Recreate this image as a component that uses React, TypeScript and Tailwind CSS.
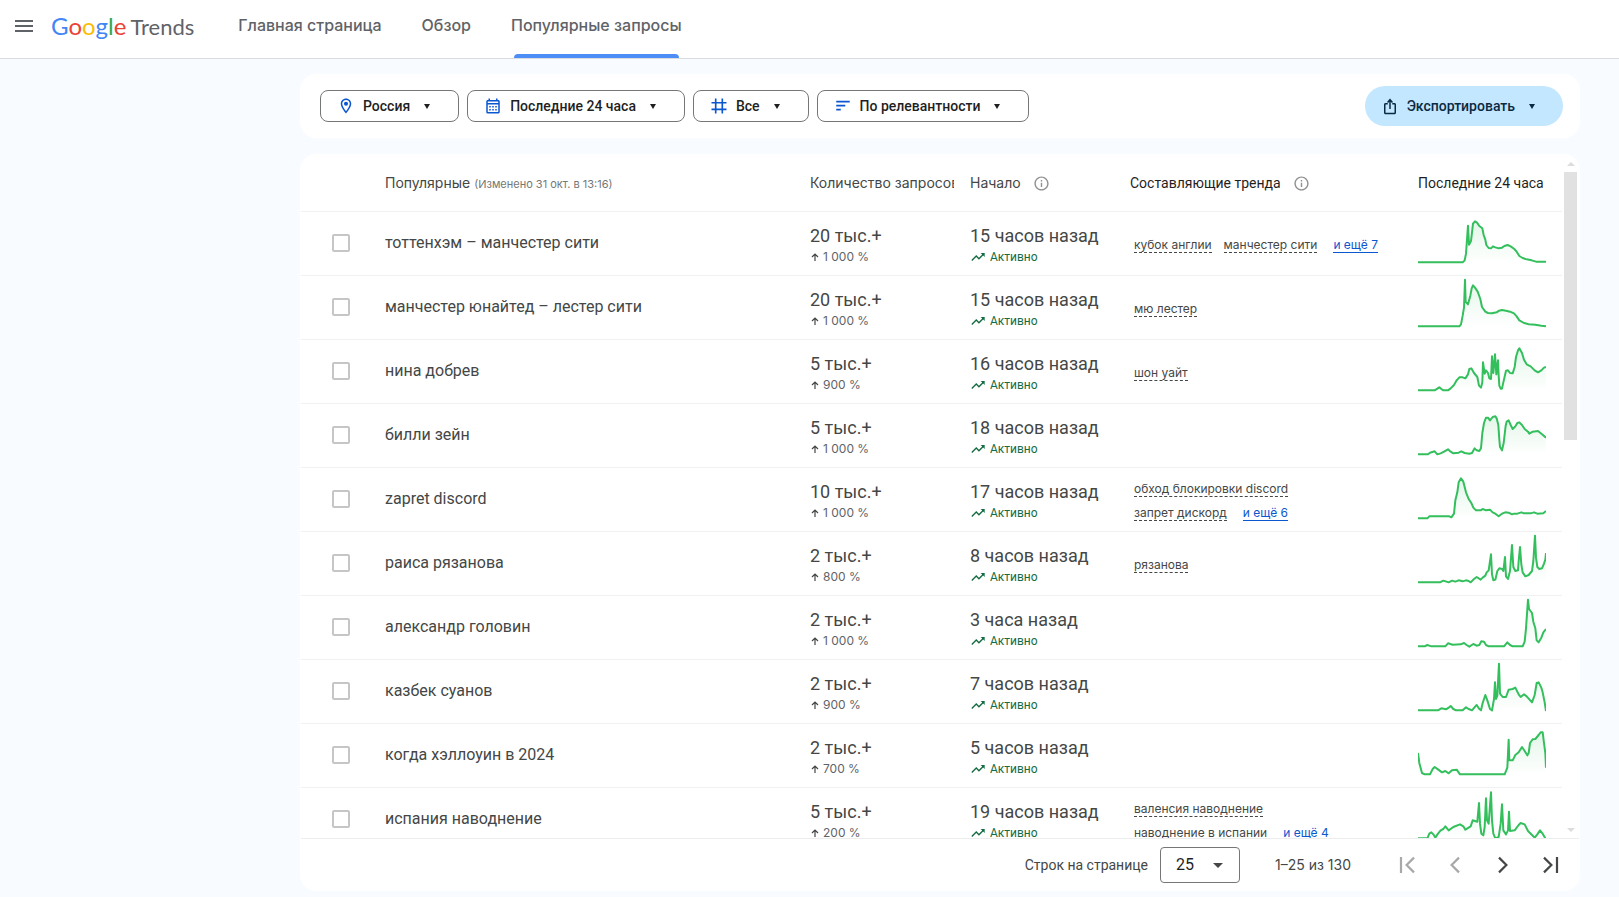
import React from "react";
import clsx from "clsx";

type Trend = {
  title: string;
  volume: string;
  growth: string;
  started: string;
  related?: string[];
  more?: string;
  points: string;
};

// points are drawn in a 384x192 box, the base line is y = 154
const trends: Trend[] = [
  {
    title: "тоттенхэм – манчестер сити",
    volume: "20 тыс.+",
    growth: "1 000 %",
    started: "15 часов назад",
    related: ["кубок англии", "манчестер сити"],
    more: "и ещё 7",
    points:
      "0,154 134,154 140,148 144,128 150,44 153,101 159,90 165,38 171,31 177,35 184,45 193,52 197,72 202,86 205,102 212,111 219,112 225,106 232,109 242,112 252,110 259,105 269,102 278,106 289,114 296,122 304,135 314,141 326,145 341,148 354,152 384,152",
  },
  {
    title: "манчестер юнайтед – лестер сити",
    volume: "20 тыс.+",
    growth: "1 000 %",
    started: "15 часов назад",
    related: ["мю лестер"],
    points:
      "0,154 124,154 129,148 134,122 138,98 141,14 143,80 150,88 157,62 161,40 165,31 171,38 179,50 187,72 192,96 202,110 210,114 222,115 236,112 243,107 252,105 264,107 276,110 288,115 296,124 304,136 318,144 332,148 352,149 370,152 384,154",
  },
  {
    title: "нина добрев",
    volume: "5 тыс.+",
    growth: "900 %",
    started: "16 часов назад",
    related: ["шон уайт"],
    points:
      "0,154 50,154 58,149 64,145 70,150 76,154 90,154 98,148 108,138 116,124 124,115 134,115 142,118 150,106 154,90 160,88 168,102 178,114 183,140 189,146 193,130 195,70 200,104 204,94 210,102 214,118 219,120 222,52 226,102 231,46 235,106 240,64 242,110 244,140 248,149 252,149 256,130 264,95 270,94 276,102 284,103 290,84 294,54 300,34 304,28 312,42 318,62 326,76 338,82 350,94 360,100 370,94 378,86 384,84",
  },
  {
    title: "билли зейн",
    volume: "5 тыс.+",
    growth: "1 000 %",
    started: "18 часов назад",
    points:
      "0,154 30,154 36,149 50,145 58,154 68,151 78,146 90,139 98,146 106,151 122,149 130,145 140,150 154,152 162,150 170,136 176,142 184,144 189,136 193,90 198,60 204,44 210,44 216,52 224,42 232,40 236,46 241,66 244,110 246,132 252,142 257,120 263,68 266,56 272,52 278,66 284,78 292,70 298,60 304,58 312,66 320,78 330,86 334,92 344,86 360,84 372,94 384,104",
  },
  {
    title: "zapret discord",
    volume: "10 тыс.+",
    growth: "1 000 %",
    started: "17 часов назад",
    related: ["обход блокировки discord", "запрет дискорд"],
    more: "и ещё 6",
    points:
      "0,154 28,154 34,148 94,148 100,151 108,140 112,100 118,76 122,46 129,34 136,44 144,76 152,96 160,108 166,122 174,130 188,130 194,126 204,130 216,128 224,136 232,140 242,148 252,140 262,136 272,137 282,142 288,140 298,140 310,136 318,139 338,139 348,136 358,140 376,139 384,132",
  },
  {
    title: "раиса рязанова",
    volume: "2 тыс.+",
    growth: "800 %",
    started: "8 часов назад",
    related: ["рязанова"],
    points:
      "0,154 66,154 76,149 92,154 102,149 112,152 122,148 134,151 144,148 152,150 158,154 168,144 176,138 188,146 194,140 202,134 206,124 212,118 219,70 222,130 226,148 232,146 238,120 244,112 252,114 256,120 261,78 264,136 270,144 276,120 282,42 286,108 292,120 300,118 302,90 306,48 310,100 314,124 322,136 332,132 342,120 346,90 351,14 354,80 358,108 364,114 372,112 378,98 382,86 384,66",
  },
  {
    title: "александр головин",
    volume: "2 тыс.+",
    growth: "1 000 %",
    started: "3 часа назад",
    points:
      "0,154 20,154 28,150 40,154 82,154 90,145 104,149 128,148 138,144 146,150 154,155 166,147 176,152 184,150 190,139 198,140 204,150 212,154 258,154 268,142 276,150 284,154 314,154 320,140 324,100 330,14 333,42 342,54 346,80 352,100 356,136 362,142 370,128 376,112 384,102",
  },
  {
    title: "казбек суанов",
    volume: "2 тыс.+",
    growth: "900 %",
    started: "7 часов назад",
    points:
      "0,154 60,154 70,148 84,151 92,146 98,141 106,150 114,154 134,154 144,145 152,150 162,154 172,142 176,138 184,150 189,154 194,132 202,108 208,124 216,150 222,154 228,120 231,70 234,120 238,110 243,14 246,104 254,114 264,114 272,92 284,90 292,86 302,106 308,114 318,106 326,112 342,130 350,108 356,72 362,70 370,86 374,100 380,130 384,156",
  },
  {
    title: "когда хэллоуин в 2024",
    volume: "2 тыс.+",
    growth: "700 %",
    started: "5 часов назад",
    points:
      "0,90 4,120 12,150 20,154 36,154 44,138 50,132 60,139 72,148 82,144 92,151 102,142 116,140 126,154 260,154 268,134 272,50 274,112 284,112 292,96 302,88 312,72 320,84 328,97 332,90 336,60 344,49 352,48 362,36 368,28 374,28 378,60 382,90 384,134",
  },
  {
    title: "испания наводнение",
    volume: "5 тыс.+",
    growth: "200 %",
    started: "19 часов назад",
    related: ["валенсия наводнение", "наводнение в испании"],
    more: "и ещё 4",
    points:
      "0,154 28,154 34,140 40,136 46,142 52,152 60,140 68,130 76,126 82,118 92,130 106,120 126,112 136,118 142,128 158,118 164,100 178,104 183,48 186,110 190,140 196,145 200,120 204,34 207,100 212,110 219,16 222,100 226,140 232,154 242,150 248,110 252,52 256,130 264,142 270,130 273,74 276,132 290,130 302,114 308,108 320,112 330,132 342,144 350,152 358,142 366,130 374,140 382,154",
  },
];

const Caret = () => (
  <svg viewBox="0 0 6 5" className="ml-3.5 h-[5px] w-1.5 shrink-0" fill="currentColor">
    <path d="M0 0h6L3 5z" />
  </svg>
);

const Icon = ({ d, className }: { d: string; className?: string }) => (
  <svg viewBox="0 0 24 24" fill="currentColor" className={clsx("shrink-0", className)}>
    <path d={d} />
  </svg>
);

const icons = {
  place:
    "M12 2C8.13 2 5 5.13 5 9c0 5.25 7 13 7 13s7-7.75 7-13c0-3.87-3.13-7-7-7zM7 9c0-2.76 2.24-5 5-5s5 2.24 5 5c0 2.88-2.88 7.19-5 9.88C9.92 16.21 7 11.85 7 9zm5-2.7a2.7 2.7 0 1 0 0 5.4 2.7 2.7 0 0 0 0-5.4z",
  calendar:
    "M19 4h-1V2h-2v2H8V2H6v2H5c-1.11 0-1.99.9-1.99 2L3 20a2 2 0 0 0 2 2h14c1.1 0 2-.9 2-2V6c0-1.100-.9-2-2-2zm0 16H5V10h14v10zm0-12H5V6h14v2zM9 14H7v-2h2v2zm4 0h-2v-2h2v2zm4 0h-2v-2h2v2zm-8 4H7v-2h2v2zm4 0h-2v-2h2v2zm4 0h-2v-2h2v2z",
  grid: "M6.500 2h2.200v4.500h6.600V2h2.200v4.500H22v2.200h-4.500v6.600H22v2.200h-4.500V22h-2.200v-4.500H8.700V22H6.500v-4.500H2v-2.200h4.500V8.700H2V6.500h4.500zM8.700 8.700v6.600h6.600V8.700z",
  sort: "M3 18h6v-2.200H3V18zM3 5v2.200h18V5H3zm0 7.600h12v-2.200H3v2.200z",
  share:
    "M16 6.500l-1.420 1.420-1.590-1.590V16h-1.980V6.330L9.420 7.920 8 6.500l4-4.500 4 4.500zM20 10v11c0 1.100-.9 2-2 2H6c-1.110 0-2-.9-2-2V10c0-1.110.89-2 2-2h3v2H6v11h12V10h-3V8h3c1.100 0 2 .89 2 2z",
  info: "M11 7h2v2h-2zm0 4h2v6h-2zm1-9C6.480 2 2 6.480 2 12s4.480 10 10 10 10-4.480 10-10S17.520 2 12 2zm0 18c-4.410 0-8-3.590-8-8s3.590-8 8-8 8 3.590 8 8-3.590 8-8 8z",
  trendingUp:
    "M16 6l2.290 2.290-4.880 4.880-4-4L2 16.590 3.410 18l6-6 4 4 6.300-6.290L22 12V6z",
};

const FilterChip = ({ icon, label }: { icon: string; label: string }) => (
  <button className="flex h-8 items-center rounded-lg border border-[#747775] pl-4 pr-7 font-[Roboto,sans-serif] text-sm font-medium text-[#1f1f1f]">
    <Icon d={icon} className="mr-2 size-[18px] text-[#0b57d0]" />
    {label}
    <Caret />
  </button>
);

const Sparkline = ({ points, id }: { points: string; id: string }) => (
  <svg viewBox="0 3 384 189" className="block h-[63px] w-32">
    <defs>
      <linearGradient id={id} x1="0" y1="0" x2="0" y2="1">
        <stop offset="0" stopColor="#34bf5d" stopOpacity="0.14" />
        <stop offset="1" stopColor="#34bf5d" stopOpacity="0" />
      </linearGradient>
    </defs>
    <polygon points={`0,154 ${points} 384,154`} fill={`url(#${id})`} />
    <polyline points={points} fill="none" stroke="#34bf5d" strokeWidth="6" strokeLinejoin="round" />
  </svg>
);

const TrendRow = ({ trend, index }: { trend: Trend; index: number }) => (
  <tr className="h-16 border-t border-[#f0f1f1] text-[#444746]">
    <td className="pl-[31px]">
      <input
        type="checkbox"
        aria-label={trend.title}
        className="block size-[18px] appearance-none rounded-xs border-2 border-[#c4c7c5]"
      />
    </td>
    <td className="text-base">{trend.title}</td>
    <td className="pt-[3px]">
      <div className="text-lg leading-6">{trend.volume}</div>
      <div className="flex items-center font-[Inter,sans-serif] text-xs leading-[18px] text-[#5f6368]">
        <svg viewBox="0 0 8 8" className="ml-px mr-1 size-2" fill="none" stroke="#444746" strokeWidth="1.2">
          <path d="M4 8V1M1 4l3-3 3 3" />
        </svg>
        {trend.growth}
      </div>
    </td>
    <td className="pt-[3px]">
      <div className="text-lg leading-6">{trend.started}</div>
      <div className="flex items-center gap-1 text-xs leading-[18px] text-[#146c43]">
        <Icon d={icons.trendingUp} className="size-4" />
        Активно
      </div>
    </td>
    <td className="pl-1 pr-9 pt-1">
      <div className="flex flex-wrap items-center gap-x-3 gap-y-2 font-[Inter,sans-serif] text-xs">
        {trend.related?.map((name) => (
          <a key={name} href="#" className="border-b border-dashed border-[#444746] leading-[15px]">
            {name}
          </a>
        ))}
        {trend.more && (
          <a href="#" className="ml-1 border-b border-[#0b57d0] leading-[15px] text-[#0b57d0]">
            {trend.more}
          </a>
        )}
      </div>
    </td>
    <td className="p-0">
      <Sparkline points={trend.points} id={`spark-${index}`} />
    </td>
  </tr>
);

const PagerButton = ({ label, d, disabled }: { label: string; d: string; disabled?: boolean }) => (
  <button
    aria-label={label}
    disabled={disabled}
    className={clsx("flex size-12 items-center justify-center", disabled ? "text-[#a8a8a8]" : "text-[#444746]")}
  >
    <svg viewBox="0 0 24 24" className="size-6" fill="none" stroke="currentColor" strokeWidth="2.2">
      <path d={d} />
    </svg>
  </button>
);

const Header = () => (
  <header className="flex h-[59px] shrink-0 items-stretch border-b border-[#dadce0] bg-white">
    <button aria-label="Главное меню" className="ml-3 flex w-6 items-center pb-1.5 text-[#5f6368]">
      <Icon d="M3 18h18v-2H3v2zm0-5h18v-2H3v2zm0-7v2h18V6H3z" className="size-6" />
    </button>
    <a href="#" className="ml-[15px] flex items-baseline gap-1 pt-2 font-[Lato] text-2xl leading-9">
      <span>
        <span className="text-[#4285f4]">G</span>
        <span className="text-[#ea4335]">o</span>
        <span className="text-[#fbbc04]">o</span>
        <span className="text-[#4285f4]">g</span>
        <span className="text-[#34a853]">l</span>
        <span className="text-[#ea4335]">e</span>
      </span>
      <span className="text-[22px] text-[#5f6368]">Trends</span>
    </a>
    <nav className="ml-11 flex gap-10 text-base font-medium text-[#5f6368]">
      <a href="#" className="flex items-center pb-2">Главная страница</a>
      <a href="#" className="flex items-center pb-2">Обзор</a>
      <a href="#" className="relative flex items-center pb-2">
        Популярные запросы
        <span className="absolute inset-x-[3px] bottom-0 h-1 rounded-t bg-[#4c8df6]" />
      </a>
    </nav>
  </header>
);

export default function App() {
  return (
    <div className="flex h-screen flex-col overflow-hidden bg-[#f8fbff] font-[Inter,'Liberation_Sans',sans-serif]">
      <Header />
      <main className="flex min-h-0 flex-1 flex-col gap-4 pb-1.5 pl-[300px] pr-[39px] pt-[15px]">
        <div className="flex h-16 shrink-0 items-center gap-2 rounded-2xl bg-white pl-5 pr-[17px]">
          <FilterChip icon={icons.place} label="Россия" />
          <FilterChip icon={icons.calendar} label="Последние 24 часа" />
          <FilterChip icon={icons.grid} label="Все" />
          <FilterChip icon={icons.sort} label="По релевантности" />
          <button className="ml-auto flex h-10 items-center rounded-full bg-[#c2e7ff] pl-4 pr-7 font-[Roboto,sans-serif] text-sm font-medium text-[#0a2a43]">
            <Icon d={icons.share} className="mr-2 size-[18px]" />
            Экспортировать
            <Caret />
          </button>
        </div>

        <section className="flex min-h-0 flex-1 flex-col rounded-2xl bg-white px-px font-[Roboto,sans-serif]">
          <div className="flex min-h-0 flex-1">
            <div className="min-w-0 flex-1 overflow-y-auto [scrollbar-width:none]">
              <table className="w-full table-fixed border-collapse text-left">
                <colgroup>
                  <col className="w-[84px]" />
                  <col />
                  <col className="w-40" />
                  <col className="w-40" />
                  <col className="w-72" />
                  <col className="w-36" />
                </colgroup>
                <thead>
                  <tr className="h-[57px] text-sm text-[#444746] [&>th]:pt-0.5">
                    <th />
                    <th className="font-[Inter,sans-serif] font-normal">
                      Популярные{" "}
                      <span className="text-[11px] text-[#747775]">(Изменено 31 окт. в 13:16)</span>
                    </th>
                    <th className="pr-4 font-[Inter,sans-serif] font-normal">
                      <div className="overflow-hidden whitespace-nowrap">Количество запросов</div>
                    </th>
                    <th className="font-[Inter,sans-serif] font-normal">
                      <div className="flex items-center gap-3">
                        Начало
                        <Icon d={icons.info} className="size-[17px] text-[#919191]" />
                      </div>
                    </th>
                    <th className="font-normal text-[#1f1f1f]">
                      <div className="flex items-center gap-3">
                        Составляющие тренда
                        <Icon d={icons.info} className="size-[17px] text-[#919191]" />
                      </div>
                    </th>
                    <th className="whitespace-nowrap font-normal text-[#1f1f1f]">Последние 24 часа</th>
                  </tr>
                </thead>
                <tbody>
                  {trends.map((trend, i) => (
                    <TrendRow key={trend.title} trend={trend} index={i} />
                  ))}
                </tbody>
              </table>
            </div>
            {/* scroll track */}
            <div className="flex w-[17px] flex-col items-center pb-1.5 pt-2">
              <svg viewBox="0 0 8 4" className="h-1 w-2" fill="#dcdcdc">
                <path d="M0 4l4-4 4 4z" />
              </svg>
              <div className="mt-1.5 h-[268px] w-[13px] bg-[#e1e1e1]" />
              <svg viewBox="0 0 8 4" className="mt-auto h-1 w-2" fill="#dcdcdc">
                <path d="M0 0h8L4 4z" />
              </svg>
            </div>
          </div>

          <footer className="flex h-[53px] shrink-0 items-center border-t border-[#eceded] pr-1 text-sm text-[#444746]">
            <label htmlFor="page-size" className="ml-auto">Строк на странице</label>
            <div className="relative ml-3">
              <select
                id="page-size"
                className="h-9 w-20 appearance-none rounded border border-[#747775] bg-white pl-[15px] text-base text-[#1f1f1f]"
              >
                <option>25</option>
              </select>
              <svg viewBox="0 0 10 5" className="pointer-events-none absolute right-[17px] top-4 h-[5px] w-2.5" fill="#444746">
                <path d="M0 0h10L5 5z" />
              </svg>
            </div>
            <span className="ml-[35px] mr-8 font-[Inter,sans-serif]">1–25 из 130</span>
            <PagerButton label="Первая страница" d="M6 4v16M19 4.600l-7.400 7.400 7.400 7.400" disabled />
            <PagerButton label="Предыдущая страница" d="M16 4.600L8.600 12l7.400 7.400" disabled />
            <PagerButton label="Следующая страница" d="M8 4.600l7.400 7.400L8 19.400" />
            <PagerButton label="Последняя страница" d="M18 4v16M5 4.600l7.400 7.400L5 19.400" />
          </footer>
        </section>
      </main>
    </div>
  );
}
